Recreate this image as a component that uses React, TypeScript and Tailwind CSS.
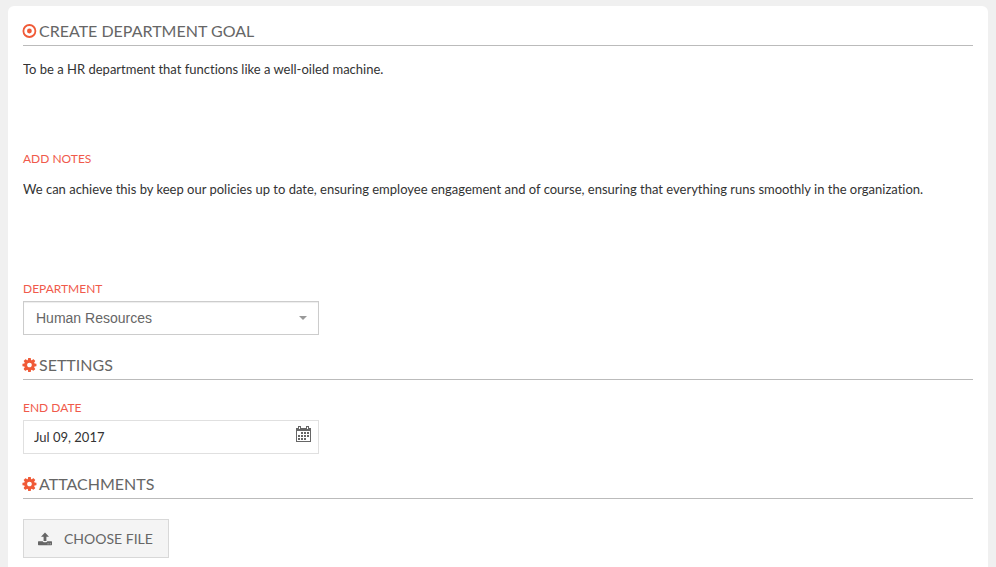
import React, { useRef, useState } from 'react';

const TargetIcon = () => (
    <svg viewBox="0 0 14 14" className="w-3.5 h-3.5 shrink-0 overflow-visible" fill="none" aria-hidden="true">
        <circle cx="6.4" cy="7" r="6" stroke="#f05a37" strokeWidth="1.8" />
        <circle cx="6.4" cy="7" r="2.4" fill="#f05a37" />
    </svg>
);

const CogIcon = () => (
    <svg viewBox="60 -128 1536 1536" className="w-3.5 h-3.5 shrink-0 overflow-visible" fill="#f05a37" aria-hidden="true">
        <path fillRule="evenodd" d="M1024 640q0 106-75 181t-181 75-181-75-75-181 75-181 181-75 181 75 75 181zm512-109v222q0 12-8 23t-20 13l-185 28q-19 54-39 91 35 50 107 138 10 12 10 25t-9 23q-27 37-99 108t-94 71q-12 0-26-9l-138-108q-44 23-91 38-16 136-29 186-7 28-36 28h-222q-14 0-24.5-8.5t-11.5-21.5l-28-184q-49-16-90-37l-141 107q-10 9-25 9-14 0-25-11-126-114-165-168-7-10-7-23 0-12 8-23 15-21 51-66.500t54-70.500q-27-50-41-99l-183-27q-13-2-21-12.500t-8-23.500v-222q0-12 8-23t19-13l186-28q14-46 39-92-40-57-107-138-10-12-10-24 0-10 9-23 26-36 98.500-107.500t94.500-71.500q13 0 26 10l138 107q44-23 91-38 16-136 29-186 7-28 36-28h222q14 0 24.500 8.500t11.500 21.500l28 184q49 16 90 37l142-107q9-9 24-9 13 0 25 10 129 119 165 170 7 8 7 22 0 12-8 23-15 21-51 66.500t-54 70.500q26 50 41 98l183 28q13 2 21 12.500t8 23.500z" />
    </svg>
);

const UploadIcon = () => (
    <svg viewBox="0 0 14 14" className="w-3.5 h-3.5 shrink-0" fill="#666" aria-hidden="true">
        <path d="M7 .6l4 4.200H8.400V9H5.600V4.800H3z" />
        <path fillRule="evenodd" d="M.6 9.200h4.100c.2.700.7 1 1.300 1h2c.6 0 1.100-.3 1.300-1h4.100c.4 0 .6.200.6.600v2.800c0 .4-.2.600-.6.600H.6c-.4 0-.6-.2-.6-.6V9.800c0-.4.200-.6.600-.6zM9.600 11.400v.8h.9v-.8zM11.800 11.400v.8h.9v-.8z" />
    </svg>
);

// [column, row] of every day square
const days = [
    [5, 6], [8, 6], [11, 6],
    [2, 9], [5, 9], [8, 9], [11, 9],
    [2, 12], [5, 12], [8, 12],
];

const CalendarIcon = () => (
    <svg viewBox="0 0 15 16" className="w-[15px] h-4" fill="#666" shapeRendering="crispEdges" aria-hidden="true">
        <path fillRule="evenodd" d="M0 2h2V0h3v2h5V0h3v2h2v14H0zM1 5v10h13V5zM3 1v2h1V1zM11 1v2h1V1z" />
        {days.map(([x, y]) => (
            <rect key={`${x}-${y}`} x={x} y={y} width="2" height="2" />
        ))}
    </svg>
);

const SectionTitle = ({ icon, children }: { icon: React.ReactNode; children: React.ReactNode }) => (
    <h2 className="flex items-center gap-0.5 pb-[3px] border-b border-[#bbb] text-base leading-[22px] text-[#666]">
        {icon}
        {children}
    </h2>
);

const labelStyle = 'block mb-[3px] text-xs leading-[18px] text-[#f05a4b]';
const areaStyle = 'block w-full pt-2 resize-none outline-none text-[13px] leading-5 text-[#333]';

export default function App() {
    const [goal, setGoal] = useState('To be a HR department that functions like a well-oiled machine.');
    const [notes, setNotes] = useState(
        'We can achieve this by keep our policies up to date, ensuring employee engagement and of course, ensuring that everything runs smoothly in the organization.'
    );
    const [department, setDepartment] = useState('Human Resources');
    const [endDate, setEndDate] = useState('Jul 09, 2017');
    const fileRef = useRef<HTMLInputElement>(null);

    return (
        <div className="flex flex-col min-h-screen px-2 pt-1.5 bg-[#f0f0f0] font-['Lato',sans-serif] [font-variant-ligatures:none]">
            <form className="flex-1 px-[15px] pt-3.5 pb-[9px] bg-white rounded-t-md" onSubmit={(e) => e.preventDefault()}>
                <SectionTitle icon={<TargetIcon />}>
                    <label htmlFor="goal">CREATE DEPARTMENT GOAL</label>
                </SectionTitle>
                <textarea
                    id="goal"
                    className={`${areaStyle} mt-[5px] h-20`}
                    value={goal}
                    onChange={(e) => setGoal(e.target.value)}
                />

                <div className="mt-[19px]">
                    <label htmlFor="notes" className={labelStyle}>ADD NOTES</label>
                    <textarea
                        id="notes"
                        className={`${areaStyle} h-[90px]`}
                        value={notes}
                        onChange={(e) => setNotes(e.target.value)}
                    />
                </div>

                <div className="mt-[19px] mb-[19px] max-w-[296px]">
                    <label htmlFor="department" className={labelStyle}>DEPARTMENT</label>
                    <div className="relative">
                        <select
                            id="department"
                            className="block w-full h-[34px] px-3 appearance-none bg-white border border-[#ccc] shadow-[inset_0_1px_1px_rgba(0,0,0,0.075)] text-sm text-[#666] font-['Liberation_Sans',Arial,sans-serif]"
                            value={department}
                            onChange={(e) => setDepartment(e.target.value)}
                        >
                            <option>Human Resources</option>
                        </select>
                        <svg viewBox="0 0 8 4" className="absolute right-3 top-[15px] w-2 h-1 pointer-events-none" fill="#999" aria-hidden="true">
                            <path d="M0 0h8L4 4z" />
                        </svg>
                    </div>
                </div>

                <SectionTitle icon={<CogIcon />}>SETTINGS</SectionTitle>
                <div className="mt-[19px] mb-[19px] max-w-[296px]">
                    <label htmlFor="endDate" className={labelStyle}>END DATE</label>
                    <div className="relative">
                        <input
                            id="endDate"
                            type="text"
                            className="block w-full h-[34px] pl-2.5 pr-8 bg-white border border-[#e0e0e0] outline-none text-[13px] text-[#333]"
                            value={endDate}
                            onChange={(e) => setEndDate(e.target.value)}
                        />
                        <button type="button" aria-label="Open calendar" className="absolute right-2 top-1.5">
                            <CalendarIcon />
                        </button>
                    </div>
                </div>

                <SectionTitle icon={<CogIcon />}>ATTACHMENTS</SectionTitle>
                <button
                    type="button"
                    className="flex items-center gap-3 mt-5 pl-3.5 pr-[15px] h-[39px] bg-[#f4f4f4] border border-[#d8d8d8] text-sm text-[#666]"
                    onClick={() => fileRef.current?.click()}
                >
                    <UploadIcon />
                    CHOOSE FILE
                </button>
                <input ref={fileRef} type="file" aria-label="Attachment" className="hidden" />
            </form>
        </div>
    );
}
